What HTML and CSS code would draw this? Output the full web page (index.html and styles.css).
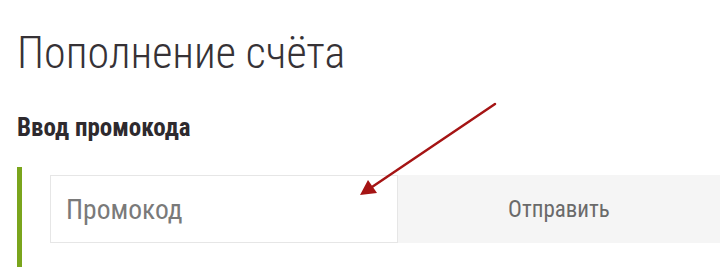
FILE: index.html
```html
<!DOCTYPE html>
<html lang="ru">
<head>
<meta charset="utf-8">
<link rel="stylesheet" href="styles.css">
</head>
<body>
<div class="page">
  <h1 class="title">Пополнение счёта</h1>
  <h2 class="subtitle">Ввод промокода</h2>
  <div class="promo">
    <form class="promo-form">
      <input class="promo-input" type="text" placeholder="Промокод">
      <button class="promo-btn" type="button">Отправить</button>
    </form>
  </div>
  <svg class="arrow" width="720" height="267" viewBox="0 0 720 267">
    <line x1="495" y1="104" x2="372" y2="187" stroke="#a51414" stroke-width="2.5" stroke-linecap="round"/>
    <polygon points="360,195 368,180 377,193" fill="#a51414"/>
  </svg>
</div>
</body>
</html>
```
FILE: styles.css
```css
html, body {
  margin: 0;
  padding: 0;
  background: #fff;
}
.page {
  position: relative;
  width: 720px;
  height: 267px;
  overflow: hidden;
  padding-left: 17px;
  box-sizing: border-box;
  font-family: "Roboto Condensed", Roboto, "Liberation Sans", sans-serif;
}
.title {
  margin: 0;
  padding-top: 27px;
  font-size: 44px;
  line-height: 53px;
  font-weight: 300;
  color: #363236;
}
.subtitle {
  margin: 0;
  padding-top: 35px;
  font-size: 25px;
  line-height: 26px;
  font-weight: 700;
  color: #2e2a2e;
}
.promo {
  margin-top: 26px;
  border-left: 5px solid #7aa51c;
  padding-left: 28px;
  padding-top: 8px;
  height: 120px;
}
.promo-form {
  display: flex;
  margin: 0;
}
.promo-input {
  box-sizing: border-box;
  width: 348px;
  height: 68px;
  border: 1px solid #e6e6e6;
  padding: 0 15px;
  font-family: inherit;
  font-size: 27.5px;
  color: #333;
  outline: none;
}
.promo-input::placeholder {
  color: #7a7a7a;
}
.promo-btn {
  flex: 0 0 322px;
  height: 68px;
  border: none;
  background: #f5f5f5;
  font-family: inherit;
  font-size: 23px;
  color: #6a6a6a;
  padding: 0;
}
.arrow {
  position: absolute;
  left: 0;
  top: 0;
  pointer-events: none;
}
```
